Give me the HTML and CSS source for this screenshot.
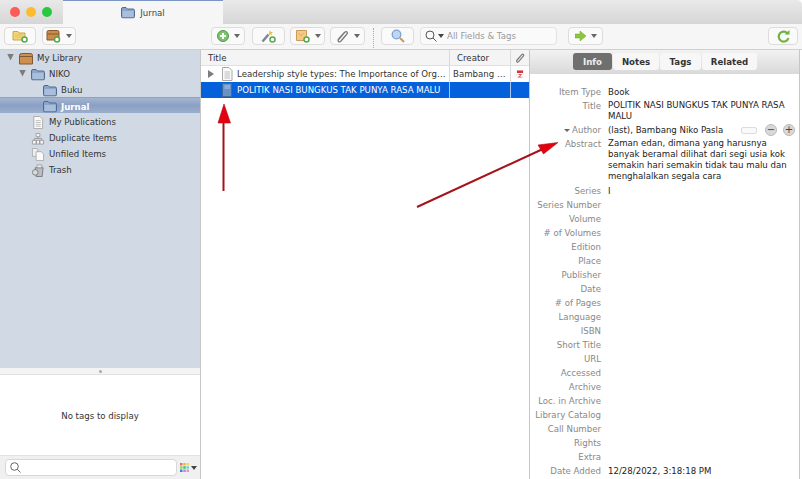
FILE: index.html
```html
<!DOCTYPE html>
<html lang="en">
<head>
<meta charset="utf-8">
<title>Jurnal</title>
<link rel="stylesheet" href="styles.css">
</head>
<body>
<svg class="defs" width="0" height="0">
  <symbol id="folder" viewBox="0 0 14 12">
    <path d="M.5 2.500Q.5 1 2 1H5L6.500 2.500H12Q13.500 2.500 13.500 4V10Q13.500 11.500 12 11.500H2Q.5 11.500 .5 10Z" fill="#8ba6cb" stroke="#4d6a8f"/>
    <path d="M1.500 4.500H12.500V10.500H1.500Z" fill="#a9bedb"/>
  </symbol>
  <symbol id="doc" viewBox="0 0 12 14">
    <path d="M1.500.5H8L11 3.500V13.500H1.500Z" fill="#fafafa" stroke="#a8a8a8"/>
    <path d="M3.500 5H9M3.500 7H9M3.500 9H9M3.500 11H9" stroke="#bdbdbd"/>
  </symbol>
</svg>

<div class="window">
  <header class="titlebar">
    <div class="lights"><i class="light red"></i><i class="light yellow"></i><i class="light green"></i></div>
    <div class="tab">
      <svg class="ico14" viewBox="0 0 14 12"><use href="#folder"/></svg>
      <span>Jurnal</span>
    </div>
  </header>

  <div class="toolbar">
    <div class="tool-left">
      <button class="btn w32">
        <svg width="16" height="14" viewBox="0 0 16 14"><path d="M1 2.500H6L7 4H13V11H1Z" fill="#f3d77e" stroke="#c9a64a"/><path d="M3 6H11M3 8H9" stroke="#e6bd5b"/><circle cx="12.500" cy="10.500" r="2.500" fill="#fff" stroke="#55a94a" stroke-width="1.500"/></svg>
      </button>
      <button class="btn w34">
        <svg width="15" height="14" viewBox="0 0 15 14"><path d="M1 3Q1 1.500 2.500 1.500H11.500Q13 1.500 13 3V11H1Z" fill="#c98a4a" stroke="#8a5a2a"/><path d="M1 5H13" stroke="#8a5a2a"/><circle cx="11" cy="10.500" r="2.500" fill="#fff" stroke="#55a94a" stroke-width="1.500"/></svg>
        <i class="caret"></i>
      </button>
    </div>
    <div class="tool-main">
      <button class="btn w34 add">
        <svg width="12" height="12" viewBox="0 0 12 12"><circle cx="6" cy="6" r="5.500" fill="#7cc36c" stroke="#4f9c45"/><path d="M6 3V9M3 6H9" stroke="#fff" stroke-width="2"/></svg>
        <i class="caret"></i>
      </button>
      <button class="btn w33">
        <svg width="15" height="14" viewBox="0 0 15 14"><path d="M1.500 12.500L7.500 5.500" stroke="#7e8794" stroke-width="2.500"/><path d="M9 1L9.800 3H12L10.300 4.500L11 6.500L9 5.300L7.500 6.500" fill="#e6b93f"/><circle cx="11.500" cy="10.500" r="2.500" fill="#fff" stroke="#55a94a" stroke-width="1.500"/></svg>
      </button>
      <button class="btn w35">
        <svg width="15" height="14" viewBox="0 0 15 14"><path d="M1.500 1.500H11.500V11.500H1.500Z" fill="#f3c98a" stroke="#cf9a55"/><path d="M3.500 4L6 7L8.500 4" fill="none" stroke="#e3b53f"/><circle cx="11.500" cy="10.500" r="2.500" fill="#fff" stroke="#55a94a" stroke-width="1.500"/></svg>
        <i class="caret"></i>
      </button>
      <button class="btn w35">
        <svg width="13" height="13" viewBox="0 0 13 13"><path d="M2.500 9.500L8.500 2.500Q10 1 11 2T10.500 4.500L5 11Q3.500 12.500 2.500 11.500T3 8.500L8 3" fill="none" stroke="#777" stroke-width="1.300"/></svg>
        <i class="caret"></i>
      </button>
      <span class="sep"></span>
      <button class="btn w33">
        <svg width="14" height="14" viewBox="0 0 14 14"><circle cx="5.500" cy="5.500" r="4.300" fill="#bcd6f3" stroke="#7fa3cf" stroke-width="1.300"/><path d="M9 9L13 13" stroke="#c79a55" stroke-width="2"/></svg>
      </button>
      <div class="search">
        <svg width="12" height="12" viewBox="0 0 12 12"><circle cx="5" cy="5" r="4" fill="none" stroke="#555"/><path d="M8 8L11.500 11.500" stroke="#555"/></svg>
        <i class="caret dark"></i>
        <span>All Fields &amp; Tags</span>
      </div>
      <button class="btn w35 go">
        <svg width="11" height="10" viewBox="0 0 11 10"><path d="M0 3H5V0L11 5L5 10V7H0Z" fill="#8cc63f" stroke="#6ea52c" stroke-width=".5"/></svg>
        <i class="caret"></i>
      </button>
    </div>
    <button class="btn w30">
      <svg width="13" height="13" viewBox="0 0 13 13"><path d="M11 4A5 5 0 1 0 11.500 8" fill="none" stroke="#6db33f" stroke-width="2.200"/><path d="M7.500 4.500H12.500V0Z" fill="#6db33f"/></svg>
    </button>
  </div>

  <main class="panes">
    <aside class="sidebar">
      <nav class="tree">
        <div class="node lvl0">
          <i class="twisty"></i>
          <svg class="ico14" viewBox="0 0 14 12"><path d="M.5 3Q.5 1 2.500 1H11.500Q13.500 1 13.500 3V11.500H.5Z" fill="#cf8f4f" stroke="#7d5a35"/><path d="M.5 4H13.500" stroke="#7d5a35"/></svg>
          <span>My Library</span>
        </div>
        <div class="node lvl1">
          <i class="twisty"></i>
          <svg class="ico14" viewBox="0 0 14 12"><use href="#folder"/></svg>
          <span>NIKO</span>
        </div>
        <div class="node lvl2">
          <i class="twisty none"></i>
          <svg class="ico14" viewBox="0 0 14 12"><use href="#folder"/></svg>
          <span>Buku</span>
        </div>
        <div class="node lvl2 current">
          <i class="twisty none"></i>
          <svg class="ico14" viewBox="0 0 14 12"><use href="#folder"/></svg>
          <span>Jurnal</span>
        </div>
        <div class="node lvl1">
          <i class="twisty none"></i>
          <svg class="ico14" viewBox="0 0 12 14"><use href="#doc"/></svg>
          <span>My Publications</span>
        </div>
        <div class="node lvl1">
          <i class="twisty none"></i>
          <svg class="ico14" viewBox="0 0 14 14"><path d="M5 1.500H9V5H5ZM1 9H5V13H1ZM5.200 9H8.800V13H5.200ZM9 9H13V13H9Z" fill="#f4f4f4" stroke="#8d8d8d" stroke-width=".8"/><path d="M7 5V7M3 9V7H11V9" fill="none" stroke="#8d8d8d" stroke-width=".8"/></svg>
          <span>Duplicate Items</span>
        </div>
        <div class="node lvl1">
          <i class="twisty none"></i>
          <svg class="ico14" viewBox="0 0 14 14"><path d="M1 .5H6L7 2V9H1Z" fill="#eee" stroke="#a0a0a0" stroke-width=".8"/><path d="M5 4H10.500L13 6.500V13.500H5Z" fill="#fafafa" stroke="#a0a0a0" stroke-width=".8"/></svg>
          <span>Unfiled Items</span>
        </div>
        <div class="node lvl1">
          <i class="twisty none"></i>
          <svg class="ico14" viewBox="0 0 14 14"><path d="M4 4H12.500L11.500 13.500H5Z" fill="#b9bdc2" stroke="#666" stroke-width=".8"/><path d="M6 1H11V4H6Z" fill="#eee" stroke="#888" stroke-width=".7"/><circle cx="4" cy="9" r="3" fill="#d9dcdf" stroke="#666" stroke-width=".8"/></svg>
          <span>Trash</span>
        </div>
      </nav>
      <div class="splitter"><i class="grip"></i></div>
      <div class="tags-empty">No tags to display</div>
      <div class="tag-footer">
        <div class="tag-search">
          <svg width="11" height="11" viewBox="0 0 11 11"><circle cx="4.500" cy="4.500" r="3.800" fill="none" stroke="#666"/><path d="M7.300 7.300L10.500 10.500" stroke="#666"/></svg>
        </div>
        <svg class="swatches" width="9" height="9" viewBox="0 0 9 9">
          <path d="M0 0h2.500v2.500H0z" fill="#ef6a6a"/><path d="M3.250 0h2.500v2.500h-2.500z" fill="#f4b04f"/><path d="M6.500 0H9v2.500H6.500z" fill="#f3d64a"/>
          <path d="M0 3.250h2.500v2.500H0z" fill="#8ed46b"/><path d="M3.250 3.250h2.500v2.500h-2.500z" fill="#3cc75a"/><path d="M6.500 3.250H9v2.500H6.500z" fill="#6fd3d9"/>
          <path d="M0 6.500h2.500V9H0z" fill="#3f7fd9"/><path d="M3.250 6.500h2.500V9h-2.500z" fill="#b08be0"/><path d="M6.500 6.500H9V9H6.500z" fill="#ef8fc4"/>
        </svg>
        <i class="caret dark"></i>
      </div>
    </aside>

    <section class="items">
      <div class="item-head">
        <div class="col-title">Title</div>
        <div class="col-creator">Creator</div>
        <div class="col-attach">
          <svg width="10" height="10" viewBox="0 0 13 13"><path d="M2.500 9.500L8.500 2.500Q10 1 11 2T10.500 4.500L5 11Q3.500 12.500 2.500 11.500T3 8.500L8 3" fill="none" stroke="#777" stroke-width="1.500"/></svg>
        </div>
      </div>
      <div class="item-row">
        <div class="col-title">
          <i class="twisty side"></i>
          <svg class="ico-doc" viewBox="0 0 12 14"><use href="#doc"/></svg>
          <span>Leadership style types: The Importance of Org…</span>
        </div>
        <div class="col-creator">Bambang …</div>
        <div class="col-attach">
          <svg width="8" height="8" viewBox="0 0 8 8"><path d="M1 .5H7V7.500H1Z" fill="#fff" stroke="#ddd" stroke-width=".6"/><path d="M1 .5H7V3H1Z" fill="#d9343a"/><path d="M2.500 4.500H5.500L2.500 7H5.500" fill="none" stroke="#d9343a" stroke-width=".8"/></svg>
        </div>
      </div>
      <div class="item-row selected">
        <div class="col-title">
          <i class="twisty side none"></i>
          <svg class="ico-doc" viewBox="0 0 12 14"><path d="M1.500 .5H10.500V13.500H1.500Z" fill="#6a93c4" stroke="#3f6a9e"/><path d="M3.500 3H9M3.500 5H9" stroke="#a9c4e3"/></svg>
          <span>POLITIK NASI BUNGKUS TAK PUNYA RASA MALU</span>
        </div>
        <div class="col-creator"></div>
        <div class="col-attach"></div>
      </div>
    </section>

    <section class="detail">
      <div class="detail-tabs">
        <div class="seg">
          <span class="seg-on">Info</span>
          <span class="seg-notes">Notes</span>
          <span class="seg-tags">Tags</span>
          <span class="seg-rel">Related</span>
        </div>
      </div>
      <div class="fields">
        <div class="field"><label>Item Type</label><div>Book</div></div>
        <div class="field"><label>Title</label><div class="multi">POLITIK NASI BUNGKUS TAK PUNYA RASA MALU</div></div>
        <div class="field author">
          <label><i class="caret tiny"></i>Author</label>
          <div class="author-val">
            <span class="author-name">(last), Bambang Niko Pasla</span>
            <i class="toggle"></i>
            <i class="round">−</i>
            <i class="round">+</i>
          </div>
        </div>
        <div class="field abstract"><label>Abstract</label><div class="multi">Zaman edan, dimana yang harusnya banyak beramal dilihat dari segi usia kok semakin hari semakin tidak tau malu dan menghalalkan segala cara</div></div>
        <div class="field"><label>Series</label><div>I</div></div>
        <div class="field"><label>Series Number</label></div>
        <div class="field"><label>Volume</label></div>
        <div class="field"><label># of Volumes</label></div>
        <div class="field"><label>Edition</label></div>
        <div class="field"><label>Place</label></div>
        <div class="field"><label>Publisher</label></div>
        <div class="field"><label>Date</label></div>
        <div class="field"><label># of Pages</label></div>
        <div class="field"><label>Language</label></div>
        <div class="field"><label>ISBN</label></div>
        <div class="field"><label>Short Title</label></div>
        <div class="field"><label>URL</label></div>
        <div class="field"><label>Accessed</label></div>
        <div class="field"><label>Archive</label></div>
        <div class="field"><label>Loc. in Archive</label></div>
        <div class="field"><label>Library Catalog</label></div>
        <div class="field"><label>Call Number</label></div>
        <div class="field"><label>Rights</label></div>
        <div class="field"><label>Extra</label></div>
        <div class="field"><label>Date Added</label><div>12/28/2022, 3:18:18 PM</div></div>
      </div>
    </section>
  </main>
</div>

<svg class="arrows" width="802" height="479" viewBox="0 0 802 479">
  <path d="M223.500 191V120" stroke="#a5121a" stroke-width="2"/>
  <path d="M224 104L230.500 123H218Z" fill="#e5000f" stroke="#a5121a" stroke-width=".6"/>
  <path d="M417 207L545 148" stroke="#a5121a" stroke-width="2"/>
  <path d="M558 142.500L543.500 154L538 145Z" fill="#e5000f" stroke="#a5121a" stroke-width=".6"/>
</svg>
</body>
</html>
```
FILE: styles.css
```css
* { box-sizing: border-box; }
html, body { margin: 0; height: 100%; }
body {
  position: relative;
  width: 802px;
  height: 479px;
  overflow: hidden;
  background: #fff;
  font: 8.6px/16px "DejaVu Sans", sans-serif;
  color: #222;
}
i { display: block; font-style: normal; }
.defs { position: absolute; }
.arrows { position: absolute; left: 0; top: 0; pointer-events: none; }

.window { width: 802px; height: 479px; display: flex; flex-direction: column; }

.titlebar {
  height: 24px;
  flex: none;
  display: flex;
  background: linear-gradient(#e9e9e9, #d6d6d6);
  border-top-right-radius: 5px;
}
.lights { width: 63px; display: flex; gap: 6px; padding: 7px 0 0 10px; }
.light { width: 10px; height: 10px; border-radius: 50%; }
.red { background: #fc5b57; }
.yellow { background: #fdbc2e; }
.green { background: #28c83f; }
.tab {
  width: 160px;
  background: #f6f6f6;
  border-top: 1px solid #7b96c6;
  display: flex;
  align-items: center;
  justify-content: center;
  gap: 5px;
  color: #444;
}
.ico14 { width: 14px; height: 13px; flex: none; }

.toolbar {
  height: 26px;
  flex: none;
  display: flex;
  padding: 3px 4px 0 0;
  background: #f6f6f6;
  border-bottom: 1px solid #cfcfcf;
}
.tool-left { width: 211px; flex: none; display: flex; gap: 6px; padding-left: 4px; }
.tool-main { flex: 1; display: flex; gap: 5px; }
.btn {
  height: 18px;
  padding: 0;
  display: flex;
  align-items: center;
  justify-content: center;
  gap: 5px;
  background: #fafafa;
  border: 1px solid #dcdcdc;
  border-radius: 4px;
  flex: none;
}
.w30 { width: 30px; }
.w32 { width: 32px; }
.w33 { width: 33px; }
.w34 { width: 34px; }
.w35 { width: 35px; }
.add { margin-right: 2px; }
.go { margin-left: 6px; }
.caret {
  width: 0;
  height: 0;
  border: 3px solid transparent;
  border-top: 4px solid #666;
  border-bottom: 0;
  flex: none;
}
.caret.dark { border-top-color: #444; }
.caret.tiny { border-width: 3px 3px 0; border-top-color: #666; margin-right: 2px; }
.sep { width: 1px; margin: 1px 2px 1px 3px; border-left: 1px dotted #aaa; flex: none; }
.search {
  width: 137px;
  height: 18px;
  flex: none;
  margin-left: 1px;
  display: flex;
  align-items: center;
  gap: 1px;
  padding-left: 4px;
  background: #fafafa;
  border: 1px solid #e2e2e2;
  border-radius: 4px;
  color: #999;
}
.search span { margin-left: 2px; }

.panes { flex: 1; display: flex; min-height: 0; }

.sidebar {
  width: 201px;
  flex: none;
  display: flex;
  flex-direction: column;
  border-right: 1px solid #c6c6c6;
}
.tree { height: 318px; flex: none; background: #d1d9e4; }
.node { height: 16px; display: flex; align-items: center; color: #333; }
.node .ico14 { margin-right: 4px; }
.lvl0 { padding-left: 7px; }
.lvl1 { padding-left: 19px; }
.lvl2 { padding-left: 31px; }
.twisty {
  width: 12px;
  height: 7px;
  flex: none;
  background: #7d7d7d;
  clip-path: polygon(0 0, 7px 0, 3.5px 100%);
  margin-top: -2px;
}
.twisty.none { background: none; }
.current {
  margin: -1px 0 1px;
  padding-top: 2px;
  background: linear-gradient(#a4b5d1, #8aa0c4 50%, #9aaecd);
  color: #fff;
  font-weight: 700;
  border-top: 1px solid #8ea2c2;
}
.splitter {
  height: 7px;
  flex: none;
  display: flex;
  align-items: center;
  justify-content: center;
  background: #f3f3f3;
  border-bottom: 1px solid #e2e2e2;
}
.grip { width: 3px; height: 3px; border-radius: 50%; background: #aaa; }
.tags-empty {
  flex: 1;
  display: flex;
  align-items: center;
  justify-content: center;
  background: #fff;
  color: #333;
  padding-top: 1px;
}
.tag-footer {
  height: 24px;
  flex: none;
  display: flex;
  align-items: center;
  padding: 0 0 0 5px;
  background: #f0f0f0;
  border-top: 1px solid #e2e2e2;
}
.tag-search {
  width: 172px;
  height: 17px;
  display: flex;
  align-items: center;
  padding-left: 4px;
  background: #fff;
  border: 1px solid #d8d8d8;
  border-radius: 4px;
  margin-right: 3px;
}
.swatches { margin-right: 2px; }

.items { width: 328px; flex: none; background: #fff; }
.item-head, .item-row { height: 16px; display: flex; }
.item-head { background: #f4f4f4; border-bottom: 1px solid #e0e0e0; color: #333; }
.col-title { width: 248px; flex: none; display: flex; align-items: center; padding-left: 7px; white-space: nowrap; overflow: hidden; }
.col-creator { width: 61px; flex: none; border-left: 1px solid #dadada; white-space: nowrap; }
.col-attach { width: 19px; flex: none; border-left: 1px solid #dadada; display: flex; align-items: center; justify-content: center; }
.item-head .col-creator { padding-left: 7px; }
.item-row .col-creator { padding-left: 3px; }
.item-row { color: #333; }
.twisty.side {
  width: 13px;
  height: 8px;
  margin: 0;
  clip-path: polygon(0 0, 6px 50%, 0 100%);
}
.twisty.side.none { background: none; }
.ico-doc { width: 12px; height: 14px; flex: none; margin-right: 4px; }
.selected { background: #0560db; color: #fff; }
.selected .col-creator, .selected .col-attach { border-left-color: #a9c7f0; }

.detail {
  flex: 1;
  min-width: 0;
  margin-right: 2px;
  border-left: 1px solid #c6c6c6;
  border-right: 1px solid #c6c6c6;
  background: #fff;
}
.detail-tabs {
  height: 24px;
  display: flex;
  justify-content: flex-end;
  padding: 3px 42px 0 0;
  background: linear-gradient(#f2f2f2, #d9d9d9);
}
.seg { display: flex; height: 17px; font-weight: 700; color: #333; gap: 1px; }
.seg span { display: flex; align-items: center; justify-content: center; background: #f7f7f7; border-radius: 3px; }
.seg .seg-on { width: 39px; background: #6f6f6f; color: #eee; }
.seg .seg-notes { width: 46px; }
.seg .seg-tags { width: 41px; }
.seg .seg-rel { width: 55px; }

.fields { padding-top: 11px; }
.field { display: grid; grid-template-columns: 71px 1fr; column-gap: 7px; line-height: 14px; min-height: 14px; }
.field label { text-align: right; color: #888; white-space: nowrap; }
.field .multi { line-height: 11px; padding: 1px 0; }
.field > div { padding-right: 10px; }
.fields .author-val { padding-right: 0; }
.abstract { margin-bottom: 1px; }
.author label { display: flex; justify-content: flex-end; align-items: center; }
.author-val { display: flex; align-items: center; }
.author-name { width: 133px; white-space: nowrap; }
.toggle { width: 16px; height: 7px; border: 1px solid #ddd; border-radius: 2px; background: #f9f9f9; margin-right: 8px; }
.round {
  width: 12px;
  height: 12px;
  border-radius: 50%;
  background: #d8d8d8;
  border: 1px solid #bbb;
  color: #444;
  font-size: 10px;
  line-height: 10px;
  text-align: center;
  margin-right: 6px;
  flex: none;
}
```
